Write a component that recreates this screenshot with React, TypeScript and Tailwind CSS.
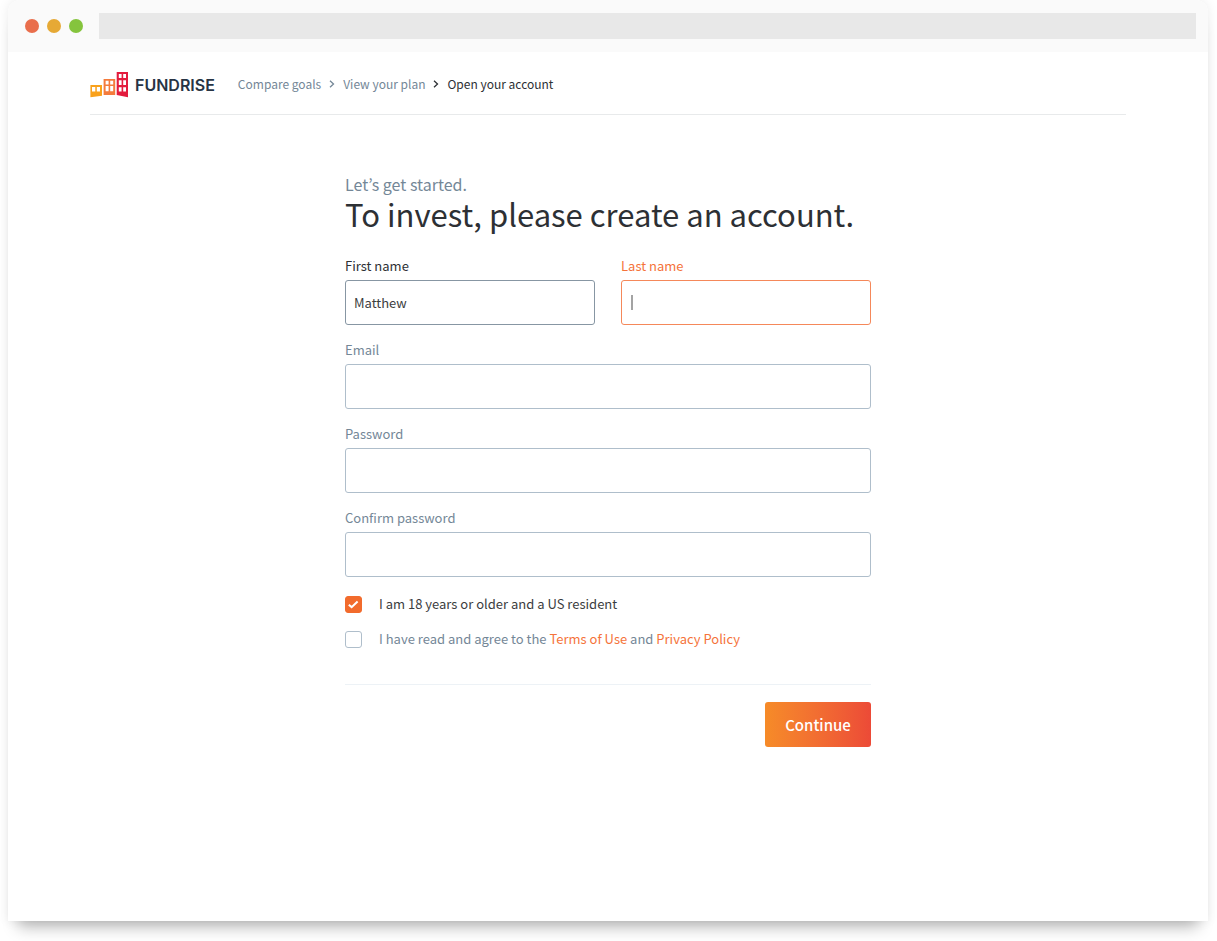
import { useState, type ReactNode } from "react";

type Tone = "filled" | "active" | "idle";

const labelTone: Record<Tone, string> = {
  filled: "text-[#2d3034]",
  active: "text-[#f5733a]",
  idle: "text-[#748797]",
};

const inputTone: Record<Tone, string> = {
  filled: "border-[#8796a3]",
  active: "border-[#f5885a]",
  idle: "border-[#afbecb]",
};

function Field({
  id,
  label,
  type = "text",
  tone = "idle",
  defaultValue,
}: {
  id: string;
  label: string;
  type?: string;
  tone?: Tone;
  defaultValue?: string;
}) {
  return (
    <div className="relative flex flex-1 flex-col gap-1">
      <label htmlFor={id} className={`text-[13px] leading-5 ${labelTone[tone]}`}>
        {label}
      </label>
      <input
        id={id}
        name={id}
        type={type}
        defaultValue={defaultValue}
        className={`h-[45px] w-full min-w-0 rounded-[3px] border bg-white px-2 text-[13px] text-[#3b3d40] outline-none ${inputTone[tone]}`}
      />
      {tone === "active" && (
        <span className="pointer-events-none absolute bottom-[15px] left-[10px] h-[15px] w-[2px] bg-[#a3a3a3]" />
      )}
    </div>
  );
}

function Check({ id, initial = false, children }: { id: string; initial?: boolean; children: ReactNode }) {
  const [on, setOn] = useState(initial);
  return (
    <div className="flex items-center gap-[17px]">
      <span className="relative flex h-[17px] w-[17px] shrink-0">
        <input
          id={id}
          type="checkbox"
          checked={on}
          onChange={() => setOn(!on)}
          className="h-[17px] w-[17px] appearance-none rounded-[3px] border border-[#afbecb] bg-white checked:border-[#f26b2c] checked:bg-[#f26b2c]"
        />
        {on && (
          <svg viewBox="0 0 17 17" className="pointer-events-none absolute inset-0 h-[17px] w-[17px]" fill="none">
            <path d="M3.8 8.7 6.6 11.1 12.6 5.4" stroke="#fff" strokeWidth="2" />
          </svg>
        )}
      </span>
      <label htmlFor={id} className={`text-[13px] leading-5 ${on ? "text-[#3b3d40]" : "text-[#748797]"}`}>
        {children}
      </label>
    </div>
  );
}

function Logo() {
  return (
    <a href="#home" className="flex items-center gap-[7px]">
      <svg viewBox="0 0 38 26" className="h-[26px] w-[38px]" fillRule="evenodd" aria-hidden="true">
        <path
          fill="#f9a11b"
          d="M.4 13H12V23.7L.4 25.2ZM2 15V19.5H5.3V15ZM6.8 15V19.5H10V15Z"
        />
        <path
          fill="#f47b3c"
          d="M13.6 7H25.2V23H13.6ZM15.6 8.8V12.4H18.6V8.8ZM20.2 8.8V12.4H23.2V8.8ZM15.6 14V19.3H18.6V14ZM20.2 14V19.3H23.2V14Z"
        />
        <path
          fill="#e31b3d"
          d="M26.7 0H38V25.2L26.7 23ZM28.8 1.9V6H31.6V1.9ZM33.2 1.9V6H36V1.9ZM28.8 8.2V13H31.6V8.2ZM33.2 8.2V13H36V8.2ZM28.8 15.2V19.4H31.6V15.2ZM33.2 15.2V19.4H36V15.2Z"
        />
      </svg>
      <span className="font-['Inter',sans-serif] text-base leading-5 font-semibold text-[#273444]">FUNDRISE</span>
    </a>
  );
}

function Chevron({ className }: { className: string }) {
  return (
    <svg viewBox="0 0 6 10" className={`h-[10px] w-[6px] ${className}`} fill="none" stroke="currentColor" aria-hidden="true">
      <path d="M1 1.8 4.5 5 1 8.2" strokeWidth="1.3" />
    </svg>
  );
}

export default function App() {
  return (
    <div className="flex min-h-screen flex-col overflow-hidden bg-white pr-[9px] pb-5 pl-2 font-['Noto_Sans_CJK_KR',sans-serif]">
      <div className="flex flex-1 flex-col rounded-t-xl bg-white shadow-[0_0_12px_rgba(0,0,0,0.08),0_16px_16px_-10px_rgba(0,0,0,0.28)]">
        <div className="flex h-[52px] items-center gap-4 rounded-t-xl bg-[#fafafa] pr-3 pl-[17px]">
          <div className="flex gap-2">
            <span className="h-[14px] w-[14px] rounded-full bg-[#e96e4c]" />
            <span className="h-[14px] w-[14px] rounded-full bg-[#e6a935]" />
            <span className="h-[14px] w-[14px] rounded-full bg-[#85c43d]" />
          </div>
          <div className="h-[26px] flex-1 bg-[#e8e8e8]" />
        </div>

        <header className="mx-[82px] flex h-[63px] items-center border-b border-[#e8eaeb] pt-1">
          <Logo />
          <nav aria-label="Breadcrumb" className="ml-[23px] flex items-center gap-2 pb-[2px] text-xs leading-5">
            <a href="#goals" className="text-[#748797]">Compare goals</a>
            <Chevron className="text-[#748797]" />
            <a href="#plan" className="text-[#748797]">View your plan</a>
            <Chevron className="text-[#2d3034]" />
            <span className="text-[#2d3034]">Open your account</span>
          </nav>
        </header>

        <main className="mx-auto w-full max-w-[526px] pt-[59px] pb-10">
          <p className="text-base leading-5 text-[#748797]">Let’s get started.</p>
          <h1 className="text-[31px] leading-10 text-[#2d3034]">To invest, please create an account.</h1>

          <form className="mt-[22px]" onSubmit={(e) => e.preventDefault()}>
            <div className="flex flex-col gap-[15px]">
              <div className="flex gap-[26px]">
                <Field id="first-name" label="First name" tone="filled" defaultValue="Matthew" />
                <Field id="last-name" label="Last name" tone="active" />
              </div>
              <Field id="email" label="Email" type="email" />
              <Field id="password" label="Password" type="password" />
              <Field id="confirm-password" label="Confirm password" type="password" />
            </div>

            <div className="mt-[17px] flex flex-col gap-[15px]">
              <Check id="age" initial>
                I am 18 years or older and a US resident
              </Check>
              <Check id="terms">
                I have read and agree to the{" "}
                <a href="#terms-of-use" className="text-[#f5733a]">Terms of Use</a> and{" "}
                <a href="#privacy" className="text-[#f5733a]">Privacy Policy</a>
              </Check>
            </div>

            <div className="mt-[35px] flex justify-end border-t border-[#edf2f6] pt-[17px]">
              <button
                type="submit"
                className="h-[45px] w-[106px] rounded-[3px] bg-linear-to-r from-[#f68b28] to-[#ec4a37] pt-[2px] text-[15px] font-medium text-white"
              >
                Continue
              </button>
            </div>
          </form>
        </main>
      </div>
    </div>
  );
}
